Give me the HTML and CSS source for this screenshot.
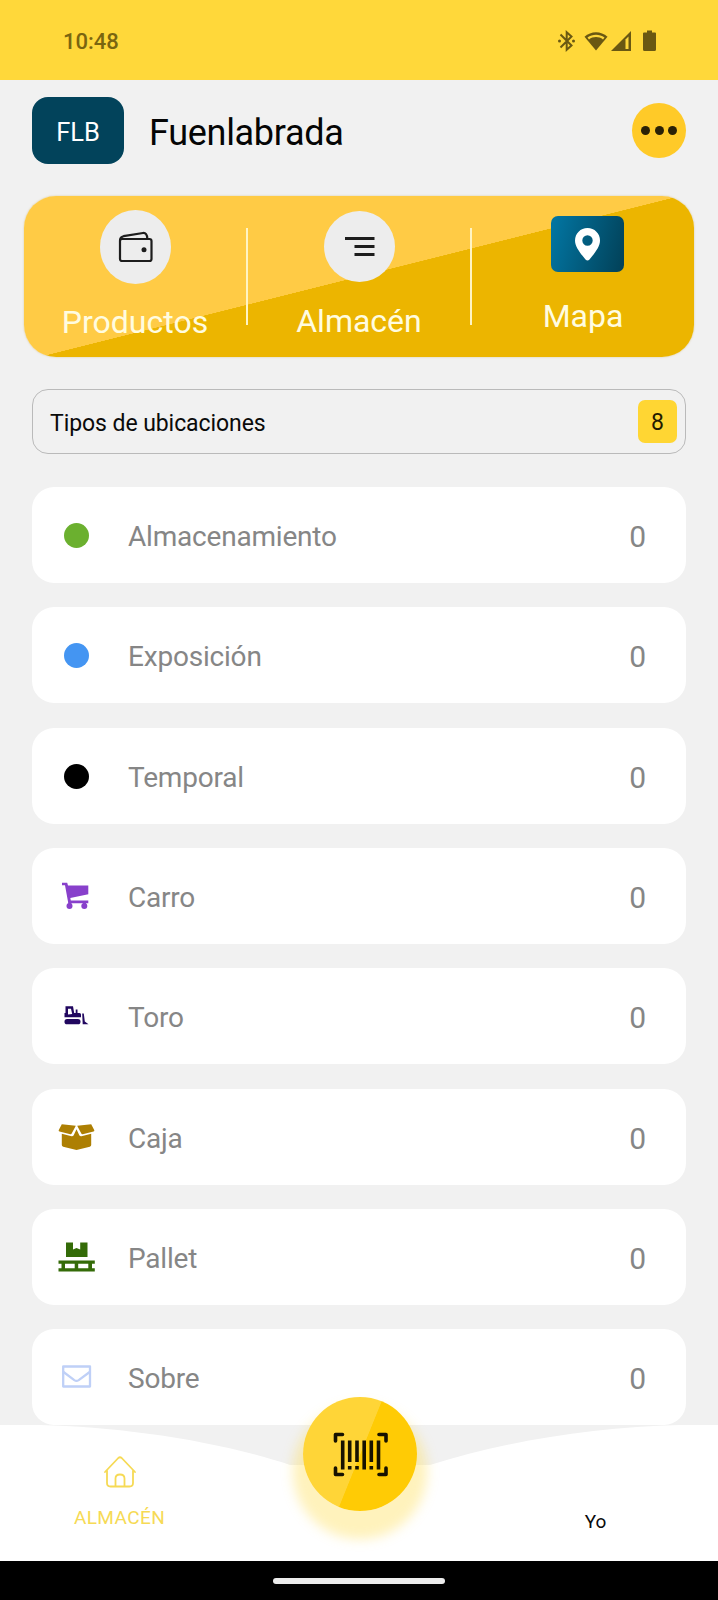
FILE: index.html
```html
<!DOCTYPE html>
<html lang="es">
<head>
<meta charset="utf-8">
<title>Fuenlabrada</title>
<link rel="stylesheet" href="styles.css">
</head>
<body>
<div class="app">
  <header class="status">
    <span class="time">10:48</span>
    <svg class="status-icons" width="102" height="24" viewBox="0 0 102 24">
      <g fill="none" stroke="#6a5812" stroke-width="2">
        <path d="M3.500 5.500 L14.500 16.500 L9.700 20.700 V3.300 L14.500 7.500 L3.500 18.500"/>
      </g>
      <circle cx="2.500" cy="12" r="1.500" fill="#6a5812"/><circle cx="16.500" cy="12" r="1.500" fill="#6a5812"/>
      <path d="M27.500 7.700 C34 1.700 44 1.700 50.500 7.700 L39 21.500Z" fill="#6a5812"/>
      <path d="M30.500 8.500 C35.500 4.800 42.500 4.800 47.500 8.500 L46 10.500 C42 7.300 36 7.300 32 10.500Z" fill="#ffd83a"/>
      <path d="M54 22 L74 2 V22Z" fill="#6a5812"/><path d="M68.500 10.500 L71.500 7.500 V20 H68.500Z" fill="#ffd83a"/>
      <path d="M87 3.500 h3 v-2 h5 v2 h3 q1 0 1 1 v16 q0 1.500 -1.500 1.500 h-10 q-1.500 0 -1.500 -1.500 v-16 q0 -1 1 -1Z" fill="#6a5812"/>
    </svg>
  </header>

  <section class="title-row">
    <span class="code">FLB</span>
    <h1 class="title">Fuenlabrada</h1>
    <button class="more" aria-label="Más"><i></i><i></i><i></i></button>
  </section>

  <nav class="panel">
    <a class="panel-item">
      <span class="bubble tall">
        <svg width="36" height="32" viewBox="0 0 36 32" fill="none" stroke="#1d1d1d" stroke-width="2.200" stroke-linejoin="round">
          <rect x="2" y="8" width="31.500" height="22" rx="2"/>
          <path d="M2 9.500 Q2 6 5.500 5.200 L25 2 Q29 1.600 29.300 7.500"/>
          <circle cx="26" cy="18.700" r="2.500" fill="#1d1d1d" stroke="none"/>
        </svg>
      </span>
      <span class="panel-label">Productos</span>
    </a>
    <span class="divider"></span>
    <a class="panel-item">
      <span class="bubble round">
        <svg width="30" height="22" viewBox="0 0 30 22" fill="none" stroke="#1d1d1d" stroke-width="2.900">
          <path d="M0 2.500H29.500M9.500 10.500H29.500M9.500 18.500H29.500"/>
        </svg>
      </span>
      <span class="panel-label stock">Almacén</span>
    </a>
    <span class="divider"></span>
    <a class="panel-item">
      <span class="map-tile">
        <svg width="25" height="33" viewBox="0 0 25 33">
          <path fill="#fff" fill-rule="evenodd" d="M12.500 0 C5.500 0 0 5.500 0 12.500 C0 19 6 26 10.500 31.500 Q12.500 33.500 14.500 31.500 C19 26 25 19 25 12.500 C25 5.500 19.500 0 12.500 0Z M12.500 7.300 a5.200 5.200 0 1 1 0 10.400 a5.200 5.200 0 1 1 0 -10.400Z"/>
        </svg>
      </span>
      <span class="panel-label map">Mapa</span>
    </a>
  </nav>

  <section class="types"><span class="types-label">Tipos de ubicaciones</span><span class="types-count">8</span></section>

  <ul class="list">
    <li class="row"><span class="icon"><i class="dot green"></i></span><span class="name">Almacenamiento</span><span class="count">0</span></li>
    <li class="row"><span class="icon"><i class="dot blue"></i></span><span class="name">Exposición</span><span class="count">0</span></li>
    <li class="row"><span class="icon"><i class="dot black"></i></span><span class="name">Temporal</span><span class="count">0</span></li>
    <li class="row">
      <span class="icon">
        <svg width="40" height="34" viewBox="0 0 40 34" fill="#8840cb">
          <path d="M6 3.800 H11.200 L12 6.500 H32.300 V15.300 L14.300 19 L14.800 21.500 H32.300 V24.200 H12.300 L9 6.300 H6Z"/>
          <circle cx="13.500" cy="27" r="3"/><circle cx="28.300" cy="27" r="3"/>
          <path d="M12.300 23.500 h3 v3 h-3Z M27 23.500 h3 v3 h-3Z"/>
        </svg>
      </span><span class="name">Carro</span><span class="count">0</span>
    </li>
    <li class="row">
      <span class="icon">
        <svg width="40" height="34" viewBox="0 0 40 34" fill="#21075f">
          <path fill-rule="evenodd" d="M9.500 7.300 H17 L18.200 14 H19.700 V10.500 H21.500 V14 H23.500 Q25 14 25 15.500 V18.300 H8.500 V14 H9.500Z M12 9.800 V15.500 L16.200 15 L15 9.800Z"/>
          <rect x="8.500" y="20" width="16" height="5.300" rx="2.600"/>
          <path d="M26.200 14.500 H27.800 L28.800 22.500 L32.500 25.300 H26.700Z"/>
        </svg>
      </span><span class="name">Toro</span><span class="count">0</span>
    </li>
    <li class="row">
      <span class="icon">
        <svg width="40" height="34" viewBox="0 0 40 34" fill="#ad7f03">
          <path d="M5.800 4.300 L19.800 5.800 L15.700 13.600 Q15.200 14.400 14.300 14.200 L3.500 11.500 Q2.200 11 2.800 10Z"/>
          <path d="M35.200 4.300 L21.200 5.800 L25.300 13.600 Q25.800 14.400 26.700 14.200 L37.500 11.500 Q38.800 11 38.200 10Z"/>
          <path d="M5.800 13.800 L15.600 16.300 Q17 16.500 17.700 15.300 L20.500 9.200 L23.300 15.300 Q24 16.500 25.400 16.300 L35.200 13.800 V25 Q35.200 26.300 33.800 26.700 L20.500 30 L7.200 26.700 Q5.800 26.300 5.800 25Z"/>
        </svg>
      </span><span class="name">Caja</span><span class="count">0</span>
    </li>
    <li class="row">
      <span class="icon">
        <svg width="40" height="34" viewBox="0 0 40 34" fill="#346b08">
          <path d="M10 2.500 H17 V9.500 L20.500 8 L24.200 9.500 V2.500 H31.500 V17 H10Z"/>
          <path fill-rule="evenodd" d="M2.500 20.500 H38.800 V23.800 H36 V28.200 H38.800 V31.500 H2.500 V28.200 H5.500 V23.800 H2.500Z M9 23.800 V28.200 H18.700 V23.800Z M22.200 23.800 V28.200 H32.300 V23.800Z"/>
        </svg>
      </span><span class="name">Pallet</span><span class="count">0</span>
    </li>
    <li class="row">
      <span class="icon">
        <svg width="40" height="34" viewBox="0 0 40 34" fill="none" stroke="#bfd0f7" stroke-width="2.300" stroke-linejoin="round">
          <rect x="7.200" y="6.500" width="26.800" height="20"/>
          <path d="M7.500 12 L18.300 20.100 Q20.500 21.500 22.700 20.100 L33.700 12"/>
        </svg>
      </span><span class="name">Sobre</span><span class="count">0</span>
    </li>
  </ul>

  <footer class="tabs">
    <svg class="wave" width="718" height="41" viewBox="0 0 718 41">
      <path fill="#f1f1f1" d="M40 0 C120 2 215 15 290 40 H430 C505 16 595 2 680 0Z"/>
    </svg>
    <a class="tab home">
      <svg width="34" height="34" viewBox="0 0 34 34" fill="none" stroke="#f6da55" stroke-width="1.800" stroke-linecap="round" stroke-linejoin="round">
        <path d="M2 17 L15.300 3 Q17 1.500 18.700 3 L32 17"/>
        <path d="M4 16 V28 Q4 31.500 7.500 31.500 H26.500 Q30 31.500 30 28 V16"/>
        <path d="M12.500 31 V23.500 Q12.500 19.500 17 19.500 Q21.500 19.500 21.500 23.500 V31"/>
      </svg>
      <span class="tab-label">ALMACÉN</span>
    </a>
    <a class="tab me"><span class="tab-label">Yo</span></a>
    <button class="scan" aria-label="Escanear">
      <svg width="56" height="46" viewBox="0 0 56 46" fill="none" stroke="#171200">
        <path stroke-width="3.600" stroke-linecap="round" stroke-linejoin="round" d="M2.500 9 V2.500 H9.500 M46 2.500 H53 V9 M2.500 36 V42.500 H9.500 M46 42.500 H53 V36"/>
        <path stroke-width="3.600" d="M9.700 8.500V37.500M16.700 8.500V30M24 8.500V30M31.200 8.500V37.500M38.300 8.500V30M45.500 8.500V37.500M16.700 34V37.500M24 34V37.500M38.300 34V37.500"/>
      </svg>
    </button>
  </footer>
  <div class="system"><span class="handle"></span></div>
</div>
</body>
</html>
```
FILE: styles.css
```css
* { box-sizing: border-box; }
body { margin: 0; background: #f1f1f1; font-family: Roboto, "Liberation Sans", sans-serif; }
button { border: 0; padding: 0; }
svg { display: block; flex: none; }
.app { width: 718px; height: 1600px; display: flex; flex-direction: column; overflow: hidden; }

.status { height: 80px; flex: none; background: #ffd83a; display: flex; justify-content: space-between; padding: 29px 59px 0 63px; }
.time { font-size: 22px; line-height: 26px; font-weight: 500; color: #7a6510; }

.title-row { height: 67px; flex: none; margin: 17px 32px 0; display: flex; align-items: center; }
.code { width: 92px; height: 67px; border-radius: 16px; background: #02435b; color: #fff; font-size: 25.500px; line-height: 71px; text-align: center; }
.title { flex: 1; margin: 5px 0 0 25px; font-size: 36px; letter-spacing: -.3px; font-weight: 400; line-height: 44px; color: #050505; }
.more { width: 54px; height: 55px; border-radius: 50%; background: #ffca28; display: flex; align-items: center; justify-content: center; gap: 4.5px; }
.more i { width: 9px; height: 9px; border-radius: 50%; background: #2a2106; }

.panel { height: 161px; flex: none; margin: 32px 24px 0; border-radius: 32px; background: linear-gradient(165.900deg, #ffcb45 50%, #ecb500 50.1%); box-shadow: 0 0 2px rgba(190, 150, 30, .45); display: flex; align-items: flex-start; }
.panel-item { flex: 1; display: flex; flex-direction: column; align-items: center; }
.bubble { width: 71px; border-radius: 50%; background: #ededed; display: flex; align-items: center; justify-content: center; }
.tall { height: 74px; margin-top: 14px; }
.tall svg { margin-left: 2px; }
.round { height: 71px; margin-top: 15px; }
.round svg { margin: 1px 0 0 1px; }
.panel-label { font-size: 32px; line-height: 38px; margin-top: 19px; color: #fffce0; }
.stock { margin-top: 20px; }
.map-tile { width: 73px; height: 56px; margin: 20px 0 0 8px; border-radius: 7px; background: linear-gradient(105deg, #0274a0 5%, #02435b 95%); display: flex; align-items: center; justify-content: center; }
.map { margin-top: 25px; }
.divider { width: 2px; height: 97px; margin-top: 32px; background: #fff4c4; }

.types { height: 65px; flex: none; margin: 32px 32px 0; padding: 0 8px 0 17px; border: 1px solid #bababa; border-radius: 16px; display: flex; align-items: center; justify-content: space-between; }
.types-label { font-size: 23px; letter-spacing: -.07px; color: #0a0a0a; padding-top: 3px; }
.types-count { width: 39px; height: 43px; border-radius: 7px; background: #ffd633; font-size: 23px; line-height: 46px; text-align: center; color: #241b00; }

.list { list-style: none; flex: none; margin: 33.200px 32px 0; padding: 0; display: flex; flex-direction: column; gap: 24.300px; }
.row { height: 96px; border-radius: 22px; background: #fff; display: flex; align-items: center; padding: 0 40px 0 24px; color: #868686; }
.icon { width: 40px; display: flex; justify-content: center; }
.dot { width: 25px; height: 25px; border-radius: 50%; margin-top: 1px; }
.green { background: #6bb02f; }
.blue { background: #4495f2; }
.black { background: #000; }
.name { flex: 1; margin-left: 32px; font-size: 28px; letter-spacing: -.2px; padding-top: 3px; }
.count { font-size: 30px; padding-top: 3px; }

.tabs { position: relative; height: 135.700px; flex: none; background: #fff; display: flex; justify-content: space-between; }
.wave { position: absolute; left: 0; top: 0; }
.tab { position: relative; display: flex; flex-direction: column; align-items: center; font-size: 19px; line-height: 24px; }
.home { width: 239px; padding-top: 30px; color: #f6da55; }
.home .tab-label { margin-top: 17px; letter-spacing: .4px; }
.me { width: 245px; padding-top: 85px; color: #0a0a0a; }
.scan { position: absolute; left: 303px; top: -28.500px; width: 114px; height: 114px; border-radius: 50%; background: linear-gradient(112deg, #ffd537 50%, #ffcb05 50.500%); box-shadow: 0 18px 12px 10px rgba(255, 220, 70, .36); display: flex; align-items: center; justify-content: center; }
.scan svg { margin-top: 2px; margin-left: 1px; }

.system { flex: 1; background: #000; display: flex; justify-content: center; padding-top: 17px; }
.handle { width: 172px; height: 6px; border-radius: 3px; background: #ececec; }
```
